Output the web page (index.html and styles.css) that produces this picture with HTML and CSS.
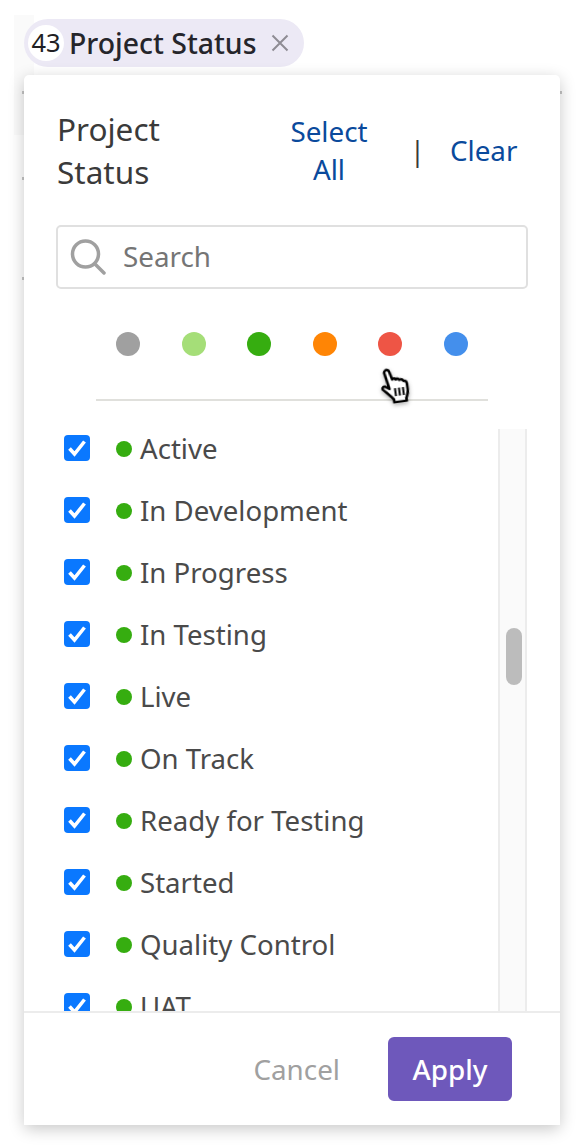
FILE: index.html

```html
<!DOCTYPE html>
<html lang="en">
<head>
    <meta charset="UTF-8">
    <meta name="viewport" content="width=device-width, initial-scale=1.0">
    <title>Project Status filter</title>
    <link rel="stylesheet" href="styles.css">
</head>
<body>
    <div class="backdrop"></div>
    <span class="tick tick-a"></span>
    <span class="tick tick-b"></span>
    <span class="tick tick-c"></span>
    <span class="tick tick-d"></span>
    <div class="chip">
        <span class="chip-count">43</span>
        <span class="chip-label">Project Status</span>
        <svg class="chip-close" width="18" height="18" viewBox="0 0 18 18"><path d="M1.5 1.5l15 15M16.500 1.500l-15 15" fill="none" stroke="#8e8c94" stroke-width="2"/></svg>
    </div>
    <div class="panel">
        <div class="panel-head">
            <div class="panel-title">Project Status</div>
            <a class="link link-select">Select All</a>
            <span class="sep">|</span>
            <a class="link">Clear</a>
        </div>
        <div class="search">
            <svg class="search-icon" width="38" height="36" viewBox="0 0 38 36"><circle cx="15.500" cy="15" r="13" fill="none" stroke="#a0a0a0" stroke-width="3.500"/><path d="M25 25l9 9" fill="none" stroke="#a0a0a0" stroke-width="3.500" stroke-linecap="round"/></svg>
            <span class="search-text">Search</span>
        </div>
        <div class="swatches">
            <span class="swatch grey"></span>
            <span class="swatch lime"></span>
            <span class="swatch green"></span>
            <span class="swatch orange"></span>
            <span class="swatch red"></span>
            <span class="swatch blue"></span>
        </div>
        <div class="list-wrap">
            <div class="list">
                <div class="row"><span class="check"><svg width="20" height="18" viewBox="0 0 20 18"><path d="M2.500 9.500l5 5.500L17.500 2.500" fill="none" stroke="#fff" stroke-width="3.600"/></svg></span><span class="dot"></span><span class="row-label">Active</span></div>
                <div class="row"><span class="check"><svg width="20" height="18" viewBox="0 0 20 18"><path d="M2.500 9.500l5 5.500L17.500 2.500" fill="none" stroke="#fff" stroke-width="3.600"/></svg></span><span class="dot"></span><span class="row-label">In Development</span></div>
                <div class="row"><span class="check"><svg width="20" height="18" viewBox="0 0 20 18"><path d="M2.500 9.500l5 5.500L17.500 2.500" fill="none" stroke="#fff" stroke-width="3.600"/></svg></span><span class="dot"></span><span class="row-label">In Progress</span></div>
                <div class="row"><span class="check"><svg width="20" height="18" viewBox="0 0 20 18"><path d="M2.500 9.500l5 5.500L17.500 2.500" fill="none" stroke="#fff" stroke-width="3.600"/></svg></span><span class="dot"></span><span class="row-label">In Testing</span></div>
                <div class="row"><span class="check"><svg width="20" height="18" viewBox="0 0 20 18"><path d="M2.500 9.500l5 5.500L17.500 2.500" fill="none" stroke="#fff" stroke-width="3.600"/></svg></span><span class="dot"></span><span class="row-label">Live</span></div>
                <div class="row"><span class="check"><svg width="20" height="18" viewBox="0 0 20 18"><path d="M2.500 9.500l5 5.500L17.500 2.500" fill="none" stroke="#fff" stroke-width="3.600"/></svg></span><span class="dot"></span><span class="row-label">On Track</span></div>
                <div class="row"><span class="check"><svg width="20" height="18" viewBox="0 0 20 18"><path d="M2.500 9.500l5 5.500L17.500 2.500" fill="none" stroke="#fff" stroke-width="3.600"/></svg></span><span class="dot"></span><span class="row-label">Ready for Testing</span></div>
                <div class="row"><span class="check"><svg width="20" height="18" viewBox="0 0 20 18"><path d="M2.500 9.500l5 5.500L17.500 2.500" fill="none" stroke="#fff" stroke-width="3.600"/></svg></span><span class="dot"></span><span class="row-label">Started</span></div>
                <div class="row"><span class="check"><svg width="20" height="18" viewBox="0 0 20 18"><path d="M2.500 9.500l5 5.500L17.500 2.500" fill="none" stroke="#fff" stroke-width="3.600"/></svg></span><span class="dot"></span><span class="row-label">Quality Control</span></div>
                <div class="row"><span class="check"><svg width="20" height="18" viewBox="0 0 20 18"><path d="M2.500 9.500l5 5.500L17.500 2.500" fill="none" stroke="#fff" stroke-width="3.600"/></svg></span><span class="dot"></span><span class="row-label">UAT</span></div>
            </div>
            <div class="scrollbar"><div class="thumb"></div></div>
        </div>
        <div class="panel-foot">
            <span class="cancel">Cancel</span>
            <button class="apply">Apply</button>
        </div>
        <svg class="cursor" width="34" height="36" viewBox="0 0 32 36">
            <path d="M7 2.500c1.500-1.200 3.500-.5 4 1.500l2 8c1-1 3-1 3.500.5 1-1 3-.8 3.500.8 1.500-.8 3.500 0 4 1.700 1.500-.3 3 .8 3 3v6c0 4-1.500 6-2.500 8v3H12v-3c-3-4-6-7-9.500-11-1-1.500.5-3.500 2.500-2.800l4 2.800L6 5c-.3-1 .2-2 1-2.500z" fill="#fff" stroke="#000" stroke-width="2.600" stroke-linejoin="round"/>
            <path d="M14.500 21v8M18.500 21v8M22.500 21v8" stroke="#000" stroke-width="2" fill="none"/>
        </svg>
    </div>
</body>
</html>
```

FILE: styles.css

```css
body {
    position: relative;
    margin: 0;
    padding: 19px 23px 23px 24px;
    height: 1148px;
    box-sizing: border-box;
    background-color: #fff;
    font-family: "Noto Sans", sans-serif;
    overflow: hidden;
}
.backdrop {
    position: absolute;
    left: 14px;
    top: 15px;
    width: 20px;
    height: 120px;
    background-color: #fafafa;
}
.tick {
    position: absolute;
    width: 2px;
    height: 3px;
    background-color: #c4c4c4;
}
.tick-a { left: 22px; top: 91px; }
.tick-b { left: 22px; top: 177px; }
.tick-c { left: 22px; top: 277px; }
.tick-d { left: 560px; top: 91px; }
.chip {
    position: relative;
    display: flex;
    align-items: center;
    width: 280px;
    height: 48px;
    box-sizing: border-box;
    padding-left: 4px;
    background-color: #ece9f5;
    border-radius: 24px;
}
.chip-count {
    width: 36px;
    height: 36px;
    line-height: 35px;
    border-radius: 50%;
    background-color: #fff;
    text-align: center;
    font-size: 25.500px;
    color: #1f1f24;
    flex-shrink: 0;
}
.chip-label {
    margin-left: 5px;
    font-size: 28.400px;
    font-weight: 500;
    color: #25252b;
    white-space: nowrap;
}
.chip-close {
    margin-left: 15px;
}
.panel {
    position: relative;
    display: flex;
    flex-direction: column;
    width: 536px;
    height: 1050px;
    margin-top: 8px;
    background-color: #fff;
    border-radius: 5px;
    box-shadow: 0 4px 16px rgba(0,0,0,0.22);
}
.panel-head {
    display: flex;
    align-items: center;
    height: 150px;
    box-sizing: border-box;
    padding: 32px 40px 32px 33px;
    flex-shrink: 0;
}
.panel-title {
    width: 160px;
    font-size: 31.500px;
    line-height: 43px;
    color: #3a3a3a;
}
.link {
    font-size: 27.800px;
    line-height: 38px;
    color: #0a4a9c;
    text-align: center;
}
.link-select {
    width: 92px;
    margin-left: 66px;
}
.sep {
    margin-left: 35px;
    margin-right: 25px;
    font-size: 27px;
    color: #3a3a3a;
}
.search {
    display: flex;
    align-items: center;
    width: 472px;
    height: 64px;
    box-sizing: border-box;
    margin-left: 32px;
    padding-left: 12px;
    border: 2px solid #e0e0e0;
    border-radius: 5px;
    flex-shrink: 0;
}
.search-text {
    margin-top: -2px;
    margin-left: 15px;
    font-size: 27.800px;
    color: #757575;
}
.swatches {
    display: flex;
    justify-content: space-between;
    width: 352px;
    margin: 43px 0 0 72px;
    padding: 0 20px 43px;
    border-bottom: 2px solid #e0e0dc;
    flex-shrink: 0;
}
.swatch {
    width: 24px;
    height: 24px;
    border-radius: 50%;
}
.grey { background-color: #a0a0a0; }
.lime { background-color: #a5de78; }
.green { background-color: #36ad10; }
.orange { background-color: #ff8505; }
.red { background-color: #ee5545; }
.blue { background-color: #448fec; }
.list-wrap {
    display: flex;
    flex: 1;
    min-height: 0;
    margin-top: 28px;
    overflow: hidden;
}
.list {
    flex: 1;
    margin-top: -12px;
    padding-left: 40px;
}
.row {
    display: flex;
    align-items: center;
    height: 62px;
}
.check {
    display: flex;
    align-items: center;
    justify-content: center;
    width: 26px;
    height: 26px;
    border-radius: 4px;
    background-color: #0a78ff;
}
.dot {
    width: 16px;
    height: 16px;
    margin-top: 2px;
    margin-left: 26px;
    border-radius: 50%;
    background-color: #36ad10;
}
.row-label {
    margin-left: 8px;
    font-size: 27.600px;
    color: #4a4a4a;
}
.scrollbar {
    width: 29px;
    margin-right: 33px;
    box-sizing: border-box;
    padding: 199px 0 0 6px;
    background-color: #fafafa;
    border-left: 2px solid #ececec;
    border-right: 2px solid #ececec;
    flex-shrink: 0;
}
.thumb {
    width: 16px;
    height: 57px;
    border-radius: 8px;
    background-color: #bcbcbc;
}
.panel-foot {
    display: flex;
    align-items: center;
    justify-content: flex-end;
    height: 114px;
    box-sizing: border-box;
    padding: 0 48px 0 0;
    border-top: 2px solid #ececec;
    background-color: #fff;
    flex-shrink: 0;
}
.cancel {
    margin-right: 48px;
    font-size: 27.800px;
    color: #a0a0a0;
}
.apply {
    width: 124px;
    height: 64px;
    border: 0;
    border-radius: 6px;
    background-color: #6e58bb;
    color: #fff;
    font-family: "Noto Sans", sans-serif;
    font-size: 27.800px;
    font-weight: 500;
}
.cursor {
    position: absolute;
    left: 355px;
    top: 292px;
    transform: rotate(-8deg);
    filter: drop-shadow(0 2px 2px rgba(0,0,0,0.3));
}
```
